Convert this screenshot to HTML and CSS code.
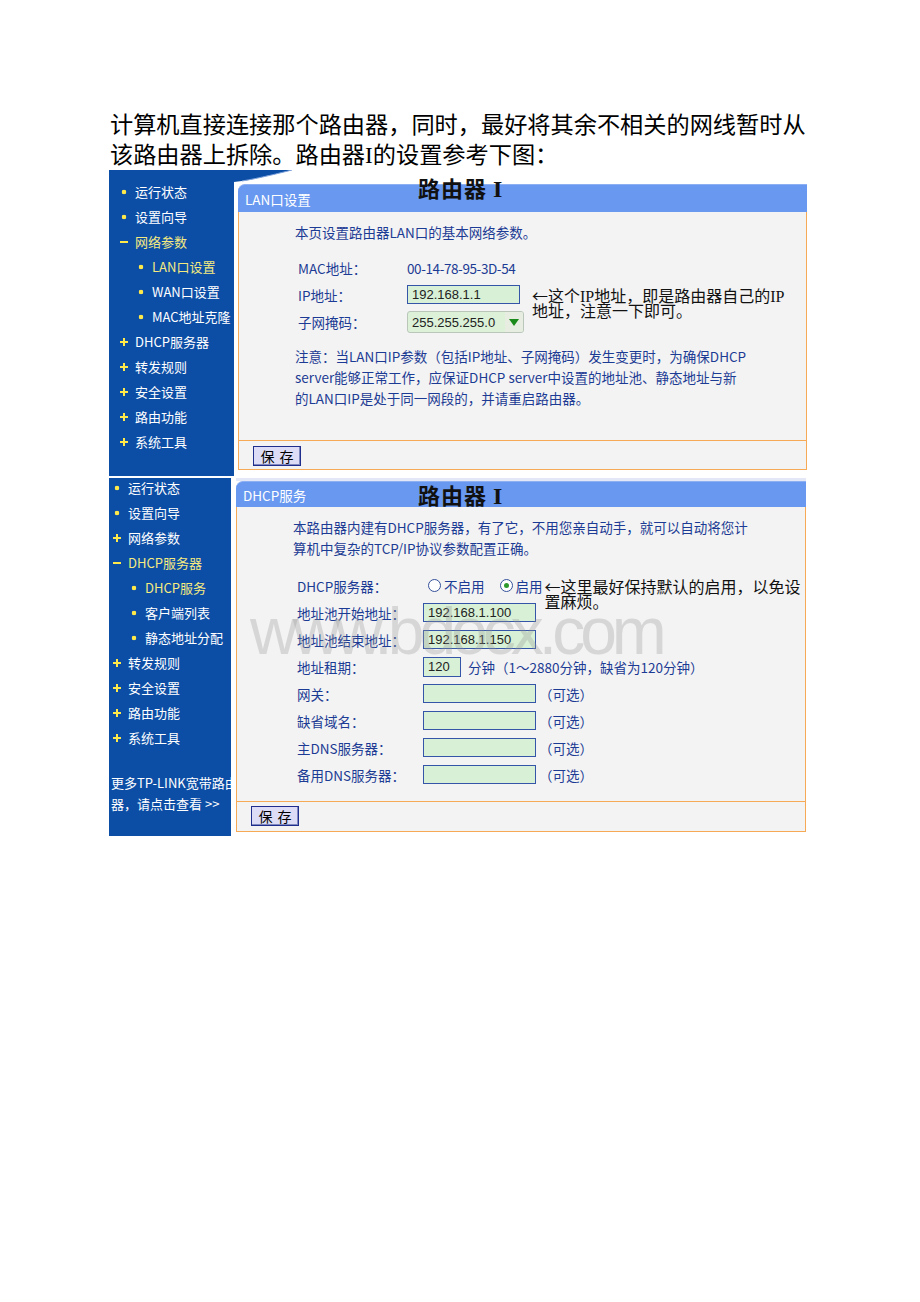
FILE: index.html
```html
<!DOCTYPE html>
<html lang="zh">
<head>
<meta charset="utf-8">
<title>路由器设置</title>
<link rel="stylesheet" href="styles.css">
</head>
<body>
<div class="page">
  <p class="intro">计算机直接连接那个路由器，同时，最好将其余不相关的网线暂时从<br>该路由器上拆除。路由器<span class="roman">I</span>的设置参考下图：</p>

  <div class="shot shot1">
    <div class="side">
      <div class="item"><i class="dot"></i>运行状态</div>
      <div class="item"><i class="dot"></i>设置向导</div>
      <div class="item on"><i class="minus"></i>网络参数</div>
      <div class="item sub on"><i class="dot"></i>LAN口设置</div>
      <div class="item sub"><i class="dot"></i>WAN口设置</div>
      <div class="item sub"><i class="dot"></i>MAC地址克隆</div>
      <div class="item"><i class="plus"></i>DHCP服务器</div>
      <div class="item"><i class="plus"></i>转发规则</div>
      <div class="item"><i class="plus"></i>安全设置</div>
      <div class="item"><i class="plus"></i>路由功能</div>
      <div class="item"><i class="plus"></i>系统工具</div>
    </div>
    <div class="main">
      <div class="strip">
        <svg class="swoosh" width="64" height="14" viewBox="0 0 64 14"><path d="M0 0H58C46 3 26 8 8 11L0 12Z" fill="#0c4ea6"/><path d="M58 0C46 3 26 8 8 11" fill="none" stroke="#7fa3dc" stroke-width="1"/></svg>
      </div>
      <div class="bar">LAN口设置</div>
      <div class="body">
        <p class="lead">本页设置路由器LAN口的基本网络参数。</p>
        <div class="form1">
          <span class="lbl">MAC地址：</span><span class="ctl val">00-14-78-95-3D-54</span>
          <span class="lbl">IP地址：</span><span class="ctl input w113">192.168.1.1</span>
          <span class="arrow-note a1"><span class="arr">←</span>这个IP地址，即是路由器自己的IP<br>地址，注意一下即可。</span>
          <span class="lbl">子网掩码：</span><span class="ctl select">255.255.255.0<i class="caret"></i></span>
        </div>
        <p class="notice">注意：当LAN口IP参数（包括IP地址、子网掩码）发生变更时，为确保DHCP<br>server能够正常工作，应保证DHCP server中设置的地址池、静态地址与新<br>的LAN口IP是处于同一网段的，并请重启路由器。</p>
      </div>
      <div class="foot"><span class="btn">保 存</span></div>
    </div>
    <div class="title">路由器 <span class="roman">I</span></div>
  </div>

  <div class="shot shot2">
    <div class="side">
      <div class="item"><i class="dot"></i>运行状态</div>
      <div class="item"><i class="dot"></i>设置向导</div>
      <div class="item"><i class="plus"></i>网络参数</div>
      <div class="item on"><i class="minus"></i>DHCP服务器</div>
      <div class="item sub on"><i class="dot"></i>DHCP服务</div>
      <div class="item sub"><i class="dot"></i>客户端列表</div>
      <div class="item sub"><i class="dot"></i>静态地址分配</div>
      <div class="item"><i class="plus"></i>转发规则</div>
      <div class="item"><i class="plus"></i>安全设置</div>
      <div class="item"><i class="plus"></i>路由功能</div>
      <div class="item"><i class="plus"></i>系统工具</div>
      <div class="more">更多TP-LINK宽带路由<br>器，请点击查看 &gt;&gt;</div>
    </div>
    <div class="main">
      <div class="strip"></div>
      <div class="bar">DHCP服务</div>
      <div class="body">
        <p class="lead">本路由器内建有DHCP服务器，有了它，不用您亲自动手，就可以自动将您计<br>算机中复杂的TCP/IP协议参数配置正确。</p>
        <div class="form2">
          <span class="lbl">DHCP服务器：</span>
          <span class="ctl">
            <i class="radio r-off"></i><span class="rtext">不启用</span>
            <i class="radio r-on"></i><span class="rtext">启用</span>
            <span class="arrow-note a2"><span class="arr">←</span>这里最好保持默认的启用，以免设<br>置麻烦。</span>
          </span>
          <span class="lbl">地址池开始地址：</span>
          <span class="ctl"><span class="input w113">192.168.1.100</span></span>
          <span class="lbl">地址池结束地址：</span>
          <span class="ctl"><span class="input w113">192.168.1.150</span></span>
          <span class="lbl">地址租期：</span>
          <span class="ctl"><span class="input w38">120</span><span class="unit">分钟（1～2880分钟，缺省为120分钟）</span></span>
          <span class="lbl">网关：</span>
          <span class="ctl"><span class="input w113"></span><span class="opt">（可选）</span></span>
          <span class="lbl">缺省域名：</span>
          <span class="ctl"><span class="input w113"></span><span class="opt">（可选）</span></span>
          <span class="lbl">主DNS服务器：</span>
          <span class="ctl"><span class="input w113"></span><span class="opt">（可选）</span></span>
          <span class="lbl">备用DNS服务器：</span>
          <span class="ctl"><span class="input w113"></span><span class="opt">（可选）</span></span>
        </div>
      </div>
      <div class="foot"><span class="btn">保 存</span></div>
    </div>
    <div class="title">路由器 <span class="roman">I</span></div>
    <div class="watermark">www.bdocx.com</div>
  </div>
</div>
</body>
</html>
```

FILE: styles.css
```css
* { box-sizing: border-box; margin: 0; padding: 0; }
body { background: #fff; font-family: "Noto Sans CJK SC", "Noto Sans", sans-serif; }

.page { width: 920px; padding: 110px 0 0 109px; }

.intro {
  font-family: "Liberation Serif", "Noto Sans CJK SC", serif;
  font-size: 23.2px;
  line-height: 30px;
  color: #000;
  padding-left: 1px;
  white-space: nowrap;
}
.roman { font-family: "Liberation Serif", serif; }

.shot { position: relative; display: flex; width: 699px; }
.shot1 { height: 306px; }
.shot2 { height: 358px; margin-top: 2px; }

/* left navigation */
.side {
  flex: none;
  background: #0c4ea6;
  color: #fff;
  font-size: 13px;
  overflow: hidden;
}
.shot1 .side { width: 125px; padding: 12px 0 0 11px; }
.shot2 .side { width: 122px; padding: 0 0 0 4px; }
.item {
  display: flex;
  align-items: center;
  height: 20px;
  line-height: 20px;
  margin-bottom: 5px;
  white-space: nowrap;
}
.item.sub { padding-left: 17px; }
.item.on { color: #f5ea80; }
.item i { display: block; flex: none; width: 8px; height: 8px; margin-right: 7px; }
.dot { background: radial-gradient(circle at center, #ffe84a 0 2px, transparent 2.6px); }
.plus {
  background:
    linear-gradient(#ffe84a, #ffe84a) center / 8px 2px no-repeat,
    linear-gradient(#ffe84a, #ffe84a) center / 2px 8px no-repeat;
}
.minus { background: linear-gradient(#ffe84a, #ffe84a) center / 8px 2px no-repeat; }
.more {
  margin: 24px 0 0 -2px;
  line-height: 21px;
  white-space: nowrap;
}

/* main panel */
.main { flex: none; display: flex; flex-direction: column; }
.shot1 .main { width: 569px; margin-left: 4px; }
.shot2 .main { width: 570px; margin-left: 5px; }

.shot1 .strip { height: 14px; }
.swoosh { display: block; margin-left: -4px; }
.shot2 .strip { height: 3px; background: #e4e8f6; }

.bar {
  display: flex;
  align-items: center;
  background: #6898f0;
  color: #fff;
  font-size: 13.5px;
  padding-left: 7px;
  border-top-left-radius: 7px;
  border-top: 1px solid #8db0f4;
}
.shot1 .bar { height: 28px; }
.shot2 .bar { height: 26px; }

.body {
  background: #f3f3f3;
  border: 1px solid #f6aa55;
  border-top: 0;
  color: #1c3b94;
  font-size: 13.5px;
  padding-left: 56px;
  white-space: nowrap;
}
.shot1 .body { height: 229px; padding-top: 12px; }
.shot2 .body { height: 295px; padding-top: 10px; }

.shot1 .lead { line-height: 17px; }
.shot2 .lead { line-height: 21px; }

.foot {
  background: #f3f3f3;
  border: 1px solid #f6aa55;
  border-top: 0;
  padding-left: 14px;
}
.shot1 .foot { height: 29px; padding-top: 5px; }
.shot2 .foot { height: 30px; padding-top: 4px; }

.btn {
  display: flex;
  align-items: center;
  justify-content: center;
  width: 48px;
  height: 20px;
  background: #dcdcf6;
  border: 1px solid #1f2e8c;
  box-shadow: inset -1px -1px 0 #8088c0;
  font-size: 14px;
  color: #000;
  word-spacing: 2px;
}

/* forms */
.form1 {
  display: grid;
  grid-template-columns: 109px 125px auto;
  grid-template-rows: 27px 27px 28px;
  align-items: center;
  margin: 13px 0 0 3px;
}
.lbl { grid-column: 1; }
.ctl { grid-column: 2; }
.val { letter-spacing: -0.4px; }

.arrow-note {
  font-family: "Liberation Serif", "Noto Sans CJK SC", serif;
  font-size: 16px;
  line-height: 15px;
  color: #111;
  white-space: nowrap;
}
.arr { font-family: "Noto Sans CJK SC", sans-serif; }
.a1 { grid-column: 3; grid-row: 2 / span 2; align-self: start; margin-top: 7px; }

.input {
  display: flex;
  align-items: center;
  flex: none;
  height: 19px;
  background: #d8f0d6;
  border: 1px solid #3556a8;
  font-family: "Liberation Sans", Arial, sans-serif;
  font-size: 13px;
  color: #222;
  padding-left: 4px;
}
.w113 { width: 113px; }
.w38 { width: 38px; height: 20px; }

.select {
  display: flex;
  align-items: center;
  justify-content: space-between;
  width: 117px;
  height: 22px;
  border: 1px solid #b9c6b9;
  border-radius: 3px;
  background: #dcf1d8;
  font-family: "Liberation Sans", Arial, sans-serif;
  font-size: 13px;
  color: #222;
  padding-left: 4px;
  overflow: hidden;
}
.caret {
  display: flex;
  align-items: center;
  justify-content: center;
  flex: none;
  width: 18px;
  height: 100%;
  background: #e7ede0;
}
.caret::after {
  content: "";
  border-left: 5px solid transparent;
  border-right: 5px solid transparent;
  border-top: 7px solid #1a8a1a;
}

.notice { margin-top: 10px; line-height: 21px; }

.form2 {
  display: grid;
  grid-template-columns: 126px auto;
  grid-auto-rows: 27px;
  align-items: center;
  margin: 13px 0 0 4px;
}
.form2 .ctl { display: flex; align-items: center; height: 27px; }

.radio {
  display: block;
  flex: none;
  width: 13px;
  height: 13px;
  border: 1px solid #34509a;
  border-radius: 50%;
  background: #fff;
  position: relative;
}
.r-off { margin-left: 5px; }
.r-on { margin-left: 15px; }
.r-on::after {
  content: "";
  position: absolute;
  left: 3px;
  top: 3px;
  width: 5px;
  height: 5px;
  border-radius: 50%;
  background: #2e9a2e;
}
.rtext { margin-left: 3px; }
.a2 { align-self: flex-start; margin-top: 7px; margin-left: 2px; }
.unit { margin-left: 7px; }
.opt { margin-left: 3px; }

/* overlays */
.title {
  position: absolute;
  left: 309px;
  font-family: "Noto Sans CJK SC", sans-serif;
  font-size: 22px;
  font-weight: 700;
  line-height: 22px;
  letter-spacing: 1px;
  color: #111;
  white-space: nowrap;
}
.title .roman { font-size: 24px; }
.shot1 .title { top: 6px; }
.shot2 .title { top: 5px; }

.watermark {
  position: absolute;
  left: 141px;
  top: 120px;
  font-family: "Liberation Sans", Arial, sans-serif;
  font-size: 66px;
  line-height: 66px;
  letter-spacing: -5px;
  color: rgba(150, 150, 150, 0.3);
  white-space: nowrap;
  pointer-events: none;
}
```
